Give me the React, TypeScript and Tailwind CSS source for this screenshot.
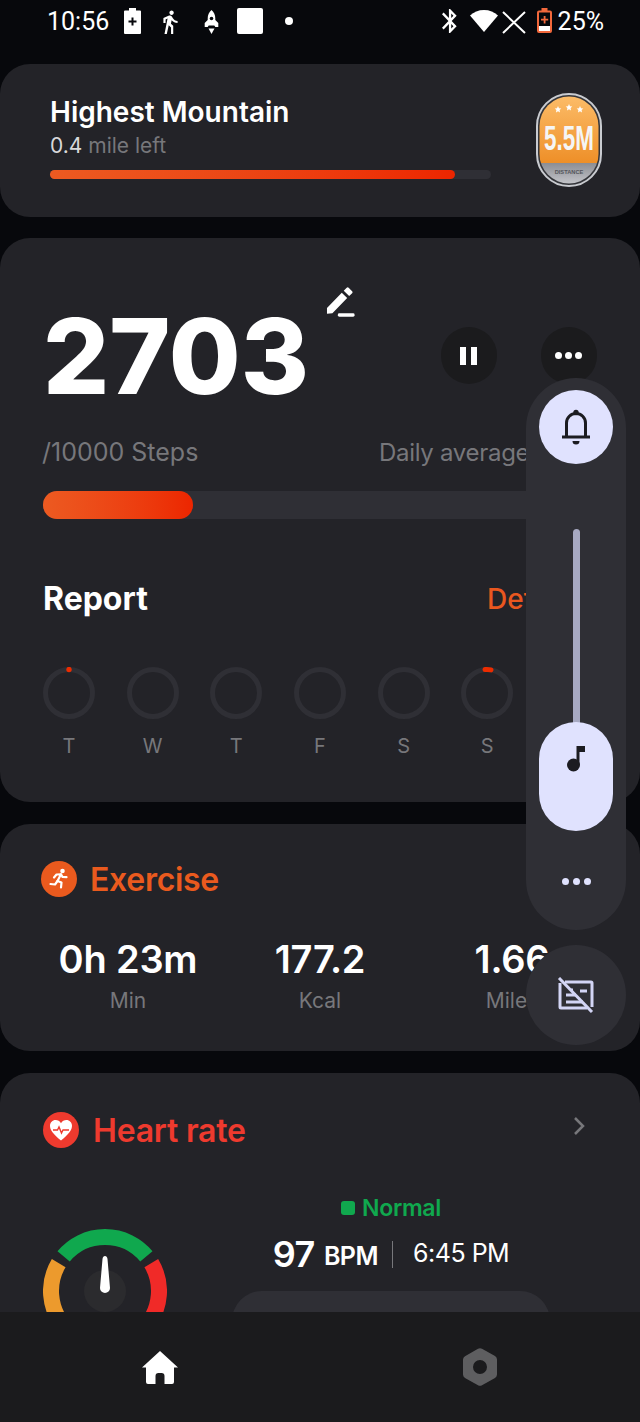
import React from "react";

const days = [
  { label: "T", arc: "dot" },
  { label: "W", arc: "" },
  { label: "T", arc: "" },
  { label: "F", arc: "" },
  { label: "S", arc: "" },
  { label: "S", arc: "short" },
  { label: "M", arc: "" },
];

function Ring({ arc }: { arc: string }) {
  return (
    <svg width="52" height="52" viewBox="0 0 52 52">
      <circle cx="26" cy="26" r="23.5" fill="none" stroke="#2f2f35" strokeWidth="5" />
      {arc === "dot" && <circle cx="26" cy="2.5" r="2.7" fill="#ec2c00" />}
      {arc === "short" && (
        <path d="M24 2.6 A23.5 23.5 0 0 1 30 2.9" fill="none" stroke="#ec2c00" strokeWidth="5" strokeLinecap="round" />
      )}
    </svg>
  );
}

function StatusBar() {
  return (
    <div className="h-[64px] flex items-start pt-[8px] pl-[47px] pr-[36px] text-white [font-family:Roboto,sans-serif]">
      <span className="text-[25px] leading-[28px] w-[62px]">10:56</span>
      <svg className="ml-[15px]" width="17" height="26" viewBox="0 0 17 26">
        <path d="M5 0h7v2.5h4a1 1 0 0 1 1 1V25a1 1 0 0 1-1 1H1a1 1 0 0 1-1-1V3.500a1 1 0 0 1 1-1h4z" fill="#fff" />
        <path d="M7.500 9.500h2v3h3v2h-3v3h-2v-3h-3v-2h3z" fill="#07080c" />
      </svg>
      <svg className="ml-[22px] mt-[2px]" width="15" height="24" viewBox="6 1 13 22" fill="#fff">
        <path d="M13.500 5.500c1.100 0 2-.9 2-2s-.9-2-2-2-2 .9-2 2 .9 2 2 2zM9.800 8.900L7 23h2.100l1.800-8 2.100 2v6h2v-7.500l-2.100-2 .6-3C14.800 12 16.800 13 19 13v-2c-1.900 0-3.500-1-4.300-2.400l-1-1.600c-.4-.6-1-1-1.700-1-.3 0-.5.1-.8.1L6 8.300V13h2V9.600l1.800-.7" />
      </svg>
      <svg className="ml-[26px] mt-[2px]" width="15" height="24" viewBox="0 0 15 24" fill="#fff">
        <path d="M7.500 0C10 2 11.300 5 11.300 8.500V10l3 3v4h-3l-1-1.500H4.700L3.700 17H.7v-4l3-3V8.500C3.700 5 5 2 7.500 0z" />
        <path d="M4.500 18.500h6L7.500 24z" />
        <circle cx="7.500" cy="8.500" r="1.800" fill="#07080c" />
      </svg>
      <div className="ml-[18px] w-[26px] h-[26px] rounded-[2px] bg-white" />
      <div className="ml-[22px] mt-[9px] w-[8px] h-[8px] rounded-full bg-white" />
      <svg className="ml-auto mt-[1px]" width="15" height="24" viewBox="5 2 13 20" fill="#fff" preserveAspectRatio="none">
        <path d="M17.710 7.710L12 2h-1v7.590L6.410 5 5 6.410 10.590 12 5 17.590 6.410 19 11 14.410V22h1l5.710-5.710-4.300-4.290 4.300-4.290zM13 5.830l1.880 1.880L13 9.590V5.830zm1.880 10.460L13 18.170v-3.760l1.880 1.880z" />
      </svg>
      <svg className="ml-[13px] mt-[2px]" width="28" height="22" viewBox="0 0 28 22">
        <path d="M14 0c5.500 0 10.300 2 14 5.500L14 22 0 5.500C3.700 2 8.500 0 14 0z" fill="#fff" />
      </svg>
      <svg className="ml-[4px] mt-[3px]" width="24" height="23" viewBox="0 0 24 23" stroke="#fff" strokeWidth="2" fill="none">
        <path d="M1 1l22 21M23 1L1 22" />
      </svg>
      <svg className="ml-[11px]" width="15" height="25" viewBox="0 0 15 25">
        <path d="M4.500 0h6v2.500h2.500a2 2 0 0 1 2 2V23a2 2 0 0 1-2 2H2a2 2 0 0 1-2-2V4.500a2 2 0 0 1 2-2h2.500z" fill="#f2683c" />
        <rect x="2" y="4.500" width="11" height="13.500" fill="#07080c" />
        <rect x="2" y="18" width="11" height="5" fill="#fff" />
        <path d="M6.700 8h1.800v2.800h2.700v1.800H8.500v2.800H6.700v-2.800H4v-1.800h2.700z" fill="#f2683c" />
      </svg>
      <span className="ml-[6px] text-[25px] leading-[28px]">25%</span>
    </div>
  );
}

function Badge() {
  return (
    <svg width="66" height="94" viewBox="0 0 66 94">
      <defs>
        <linearGradient id="badgeOrange" x1="0" y1="0" x2="0" y2="1">
          <stop offset="0" stopColor="#fcbc68" />
          <stop offset="1" stopColor="#ee8f28" />
        </linearGradient>
        <linearGradient id="badgeGrey" x1="0" y1="0" x2="0" y2="1">
          <stop offset="0" stopColor="#8c8d93" />
          <stop offset="1" stopColor="#c4c5ca" />
        </linearGradient>
        <clipPath id="badgeClip">
          <rect x="3.500" y="3.500" width="59" height="87" rx="29.500" />
        </clipPath>
      </defs>
      <rect x="1" y="1" width="64" height="92" rx="32" fill="#34353a" stroke="#c9cbd0" strokeWidth="2" />
      <g clipPath="url(#badgeClip)">
        <rect x="3" y="3" width="60" height="67" fill="url(#badgeOrange)" />
        <rect x="3" y="70" width="60" height="21" fill="url(#badgeGrey)" />
      </g>
      <g fill="#fff">
        <path d="M22 13l1 2.200 2.300.3-1.700 1.600.4 2.300-2-1.100-2 1.100.4-2.300-1.700-1.600 2.300-.3z" />
        <path d="M33 11l1 2.200 2.300.3-1.700 1.600.4 2.300-2-1.100-2 1.100.4-2.300-1.700-1.600 2.300-.3z" />
        <path d="M44 13l1 2.200 2.300.3-1.700 1.600.4 2.300-2-1.100-2 1.100.4-2.300-1.700-1.600 2.300-.3z" />
      </g>
      <text transform="translate(33 57) scale(0.64 1)" textAnchor="middle" fontFamily="Liberation Sans, sans-serif" fontWeight="700" fontSize="35" fill="#f5f5f5">
        5.5M
      </text>
      <text transform="translate(33 81) scale(0.95 1)" textAnchor="middle" fontFamily="Liberation Sans, sans-serif" fontWeight="700" fontSize="6" fill="#55565c">
        DISTANCE
      </text>
    </svg>
  );
}

function Gauge() {
  const cx = 62;
  const cy = 62;
  const r = 54;
  const pt = (deg: number) => {
    const a = ((deg - 90) * Math.PI) / 180;
    return `${cx + r * Math.cos(a)} ${cy + r * Math.sin(a)}`;
  };
  const arc = (from: number, to: number) => `M${pt(from)} A${r} ${r} 0 0 1 ${pt(to)}`;
  return (
    <svg width="124" height="124" viewBox="0 0 124 124" fill="none">
      <path d={arc(-130, -59)} stroke="#ec9a2d" strokeWidth="16" />
      <path d={arc(-50, 50)} stroke="#10a84e" strokeWidth="16" />
      <path d={arc(59, 130)} stroke="#f02a28" strokeWidth="16" />
      <circle cx="62" cy="62" r="21" fill="#2b2b2e" />
      <path d="M59.500 30c.3-4 4.700-4 5 0l2.500 29a5 5 0 0 1-10 0z" fill="#fff" />
    </svg>
  );
}

export default function App() {
  return (
    <div className="relative w-[640px] h-[1422px] overflow-hidden flex flex-col bg-[#07080c] [font-family:Inter,sans-serif]">
      <StatusBar />

      <div className="flex-1 min-h-0 overflow-hidden flex flex-col">
        <section className="shrink-0 h-[153px] rounded-[30px] bg-[#232328] pl-[50px] pr-[38px] pt-[31px] flex items-start">
          <div className="w-[441px]">
            <h2 className="text-[28px] leading-[34px] font-semibold text-white">Highest Mountain</h2>
            <p className="mt-[4px] text-[21px] leading-[26px] text-[#77777b]">
              <span className="text-[#d8d8da]">0.4</span> mile left
            </p>
            <div className="mt-[11px] h-[9px] rounded-full bg-[#2f2f35]">
              <div className="h-full w-[405px] rounded-full bg-gradient-to-r from-[#ec5a21] to-[#ec2500]" />
            </div>
          </div>
          <div className="ml-auto -mt-[2px]">
            <Badge />
          </div>
        </section>

        <section className="shrink-0 mt-[21px] h-[564px] rounded-[30px] bg-[#232328] px-[43px]">
          <div className="flex h-[190px] items-start">
            <div className="mt-[55px] text-[104px] leading-[126px] font-extrabold text-white">2703</div>
            <svg className="ml-[17px] mt-[49px]" width="30" height="31" viewBox="0 0 30 31" fill="#fff">
              <path d="M1 21L16 5.500l5.500 5.500L6.500 26.500 1 27zM18 3.500L21 .5a1.500 1.500 0 0 1 2 0l3.500 3.500a1.500 1.500 0 0 1 0 2l-3 3z" />
              <rect x="12" y="26.500" width="17" height="3.500" rx="1.500" />
            </svg>
            <button className="ml-[85px] mt-[89px] w-[57px] h-[57px] rounded-full bg-[#1b1b1d] flex items-center justify-center">
              <span className="flex gap-[5px]">
                <span className="w-[6px] h-[18px] bg-white" />
                <span className="w-[6px] h-[18px] bg-white" />
              </span>
            </button>
            <button className="ml-[44px] mt-[89px] w-[57px] h-[57px] rounded-full bg-[#1b1b1d] flex items-center justify-center gap-[3px]">
              <span className="w-[7px] h-[7px] rounded-full bg-white" />
              <span className="w-[7px] h-[7px] rounded-full bg-white" />
              <span className="w-[7px] h-[7px] rounded-full bg-white" />
            </button>
          </div>

          <div className="flex h-[48px] pt-[2px] items-center text-[#77777b]">
            <span className="-ml-[1px] text-[25px]">/10000 Steps</span>
            <span className="ml-auto w-[218px] text-[24px] tracking-[-0.3px]">Daily average</span>
          </div>

          <div className="mt-[15px] h-[28px] rounded-full bg-[#2f2f35]">
            <div className="h-full w-[150px] rounded-full bg-gradient-to-r from-[#ec5a21] to-[#ec2500]" />
          </div>

          <div className="mt-[58px] flex h-[44px] items-center">
            <h3 className="text-[32px] font-bold text-white">Report</h3>
            <span className="ml-auto w-[110px] text-[28px] font-medium text-[#e9571f]">Details</span>
          </div>

          <div className="mt-[46px] flex justify-between">
            {days.map((d, i) => (
              <div key={i} className="flex w-[52px] flex-col items-center">
                <Ring arc={d.arc} />
                <span className="mt-[14px] text-[20px] leading-[26px] text-[#77777b]">{d.label}</span>
              </div>
            ))}
          </div>
        </section>

        <section className="shrink-0 mt-[22px] h-[227px] rounded-[30px] bg-[#232328] px-[32px]">
          <div className="flex items-center h-[36px] mt-[37px] ml-[9px]">
            <span className="w-[36px] h-[36px] rounded-full bg-[#ea5a1e] flex items-center justify-center">
              <svg width="24" height="24" viewBox="0 0 24 24" fill="none" stroke="#fff" strokeWidth="2.200" strokeLinejoin="round" strokeLinecap="round">
                <circle cx="15.500" cy="4" r="2.300" fill="#fff" stroke="none" />
                <path d="M7 10.500l2.500-3 4.500-.2-3.500 6.700-2.500 3.500-4.500-.5" />
                <path d="M14 7.300l1.500 2.700 4 .2" />
                <path d="M10.500 14l4 1.500-.5 5" />
              </svg>
            </span>
            <h3 className="ml-[13px] mt-[2px] text-[32px] font-semibold text-[#ea5a1e] tracking-[-0.3px]">Exercise</h3>
          </div>
          <div className="mt-[40px] grid grid-cols-3 text-center">
            {[
              ["0h 23m", "Min"],
              ["177.2", "Kcal"],
              ["1.66", "Miles"],
            ].map(([value, unit]) => (
              <div key={unit}>
                <div className="text-[38px] leading-[44px] font-semibold text-white tracking-[-0.2px]">{value}</div>
                <div className="mt-[7px] text-[21px] leading-[26px] text-[#77777b]">{unit}</div>
              </div>
            ))}
          </div>
        </section>

        <section className="shrink-0 mt-[22px] h-[400px] rounded-[30px] bg-[#232328] pl-[43px] pr-[55px]">
          <div className="flex items-center h-[36px] mt-[39px]">
            <span className="w-[36px] h-[36px] shrink-0 rounded-full bg-[#ee3a2e] flex items-center justify-center">
              <svg width="24" height="22" viewBox="0 0 24 22">
                <path d="M12 21.500C4 15 1 11 1 6.800 1 3.500 3.500 1 6.600 1c2.200 0 4.200 1.200 5.400 3.200C13.200 2.200 15.200 1 17.400 1 20.500 1 23 3.500 23 6.800c0 4.200-3 8.200-11 14.700z" fill="#fff" />
                <path d="M4 11h4.500l1.500-3 2.500 6 1.500-3h6" fill="none" stroke="#ee3a2e" strokeWidth="1.400" />
              </svg>
            </span>
            <h3 className="ml-[14px] mt-[2px] text-[32px] font-semibold text-[#ee3a2e] tracking-[-0.2px]">Heart rate</h3>
            <svg className="ml-auto -mt-[8px]" width="12" height="20" viewBox="0 0 12 20" fill="none" stroke="#77777b" strokeWidth="2.500">
              <path d="M2 2l8 8-8 8" />
            </svg>
          </div>
          <div className="flex">
            <div className="mt-[81px] shrink-0">
              <Gauge />
            </div>
            <div className="ml-[65px] w-[318px] shrink-0 flex flex-col items-center">
              <div className="mt-[45px] flex items-center h-[30px] text-[23px] font-semibold text-[#10a84e] tracking-[-0.3px]">
                <span className="w-[14px] h-[14px] rounded-[3px] bg-[#10a84e]" />
                <span className="ml-[7px]">Normal</span>
              </div>
              <div className="mt-[16px] flex items-center h-[30px] text-white">
                <span className="text-[36px] font-semibold tracking-[-0.5px]">97</span>
                <span className="ml-[9px] mt-[6px] text-[25px] font-semibold tracking-[-0.5px]">BPM</span>
                <span className="ml-[14px] w-[1px] h-[27px] bg-[#77777b]" />
                <span className="ml-[20px] text-[25px] tracking-[-0.5px]">6:45 PM</span>
              </div>
              <div className="mt-[22px] h-[80px] w-full rounded-[30px] bg-[#2f2f35]" />
            </div>
          </div>
        </section>
      </div>

      <nav className="relative shrink-0 h-[110px] bg-[#1b1b1d] grid grid-cols-2 place-items-center">
        <svg width="36" height="33" viewBox="0 0 36 33" fill="#fff">
          <path d="M18 0l18 16.500h-4V31a2 2 0 0 1-2 2h-7.500v-8a3 3 0 0 0-3-3h-3a3 3 0 0 0-3 3v8H6a2 2 0 0 1-2-2V16.500H0z" />
        </svg>
        <svg width="34" height="38" viewBox="0 0 34 38">
          <path fillRule="evenodd" d="M15 .8a4 4 0 0 1 4 0l13 7.300a4 4 0 0 1 2 3.400v15a4 4 0 0 1-2 3.400l-13 7.300a4 4 0 0 1-4 0L2 30a4 4 0 0 1-2-3.400v-15a4 4 0 0 1 2-3.400zM17 12a7 7 0 1 0 0 14 7 7 0 0 0 0-14z" fill="#5e5e60" />
        </svg>
      </nav>

      <div className="absolute left-[526px] top-[378px] w-[100px] h-[552px] rounded-[50px] bg-[#2f2f35] flex flex-col items-center pt-[12px]">
        <button className="w-[74px] h-[74px] rounded-full bg-[#e0e2fe] flex items-center justify-center">
          <svg width="30" height="36" viewBox="0 0 30 36" fill="none">
            <path d="M5.500 28V14a9.500 9.500 0 0 1 19 0v14" stroke="#1c1c21" strokeWidth="3" />
            <circle cx="15" cy="3.500" r="2.700" fill="#1c1c21" />
            <rect x="1" y="26.500" width="28" height="3" fill="#1c1c21" />
            <path d="M11.500 32h7a3.500 3.500 0 0 1-7 0z" fill="#1c1c21" />
          </svg>
        </button>
        <div className="relative mt-[65px] w-[7px] h-[201px] rounded-full bg-[#a7a9c2]" />
        <div className="relative -mt-[8px] w-[74px] h-[109px] rounded-[37px] bg-[#e0e2fe] flex justify-center pt-[23px]">
          <svg width="20" height="28" viewBox="0 0 20 28" fill="#1c1c21">
            <circle cx="7.500" cy="20" r="6.500" />
            <path d="M10.500 1H19v6h-5.500v13h-3z" />
          </svg>
        </div>
        <div className="mt-[47px] flex gap-[4px]">
          <span className="w-[7px] h-[7px] rounded-full bg-[#e0e2fe]" />
          <span className="w-[7px] h-[7px] rounded-full bg-[#e0e2fe]" />
          <span className="w-[7px] h-[7px] rounded-full bg-[#e0e2fe]" />
        </div>
      </div>

      <button className="absolute left-[526px] top-[945px] w-[100px] h-[100px] rounded-full bg-[#2f2f35] flex items-center justify-center">
        <svg width="38" height="36" viewBox="0 0 38 36" fill="none" stroke="#d3d5f5" strokeWidth="3">
          <path d="M8 5h26a1 1 0 0 1 1 1v24M30 31H4a1 1 0 0 1-1-1V6" />
          <path d="M2 1l33 34" />
          <path d="M9 18h10M23 14h7M9 25h17M14 13h2" />
        </svg>
      </button>
    </div>
  );
}
